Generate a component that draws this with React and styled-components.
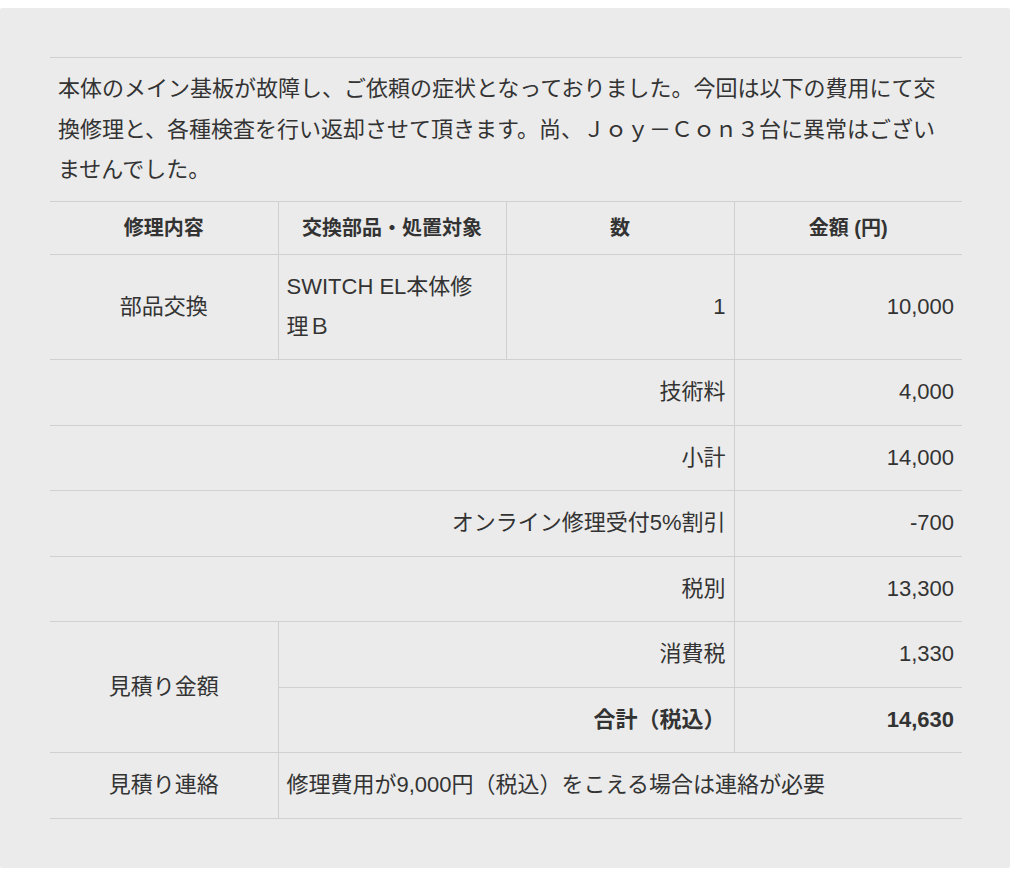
import React from 'react';
import styled, { createGlobalStyle } from 'styled-components';

const Global = createGlobalStyle`
  html, body {
    margin: 0;
    padding: 0;
    background: #ffffff;
  }
  body {
    font-family: "Liberation Sans", "Noto Sans CJK JP", sans-serif;
    color: #333333;
  }
`;

const Page = styled.div`
  padding: 8px 14px 18px 0;
`;

const Panel = styled.section`
  background: #ebebeb;
  padding: 49px 48px 49px 50px;
  border-radius: 2px;
`;

const Intro = styled.p`
  margin: 0;
  border-top: 1px solid #d0d0d0;
  padding: 11px 8px 10.5px;
  font-size: 22px;
  line-height: 40.5px;
`;

const Table = styled.table`
  width: 100%;
  border-collapse: collapse;
  table-layout: fixed;
  border-left-style: hidden;
  border-right-style: hidden;
`;

const HeadCell = styled.th`
  border: 1px solid #d0d0d0;
  padding: 12px 8px;
  font-size: 20px;
  line-height: 28px;
  font-weight: 700;
  text-align: center;
  color: #333333;
`;

const Cell = styled.td`
  border: 1px solid #d0d0d0;
  padding: ${(p) => (p.$align === 'left' || !p.$align ? '12px 16px 12px 8px' : '12px 8px')};
  font-size: 22px;
  line-height: 40.5px;
  text-align: ${(p) => p.$align || 'left'};
  font-weight: ${(p) => (p.$bold ? 700 : 400)};
  vertical-align: middle;
  color: #333333;
`;

const PartCell = styled(Cell)`
  padding-top: 11.5px;
  padding-bottom: 11.5px;
`;

const summaryRows = [
  { label: '技術料', value: '4,000' },
  { label: '小計', value: '14,000' },
  { label: 'オンライン修理受付5%割引', value: '-700' },
  { label: '税別', value: '13,300' },
];

export default function App() {
  return (
    <>
      <Global />
      <Page>
        <Panel>
          <Intro>
            本体のメイン基板が故障し、ご依頼の症状となっておりました。今回は以下の費用にて交換修理と、各種検査を行い返却させて頂きます。尚、Ｊｏｙ－Ｃｏｎ３台に異常はございませんでした。
          </Intro>
          <Table>
            <colgroup>
              <col />
              <col />
              <col />
              <col />
            </colgroup>
            <thead>
              <tr>
                <HeadCell>修理内容</HeadCell>
                <HeadCell>交換部品・処置対象</HeadCell>
                <HeadCell>数</HeadCell>
                <HeadCell>金額 (円)</HeadCell>
              </tr>
            </thead>
            <tbody>
              <tr>
                <PartCell $align="center">部品交換</PartCell>
                <PartCell>SWITCH EL本体修理Ｂ</PartCell>
                <PartCell $align="right">1</PartCell>
                <PartCell $align="right">10,000</PartCell>
              </tr>
              {summaryRows.map((r) => (
                <tr key={r.label}>
                  <Cell colSpan={3} $align="right">{r.label}</Cell>
                  <Cell $align="right">{r.value}</Cell>
                </tr>
              ))}
              <tr>
                <Cell rowSpan={2} $align="center">見積り金額</Cell>
                <Cell colSpan={2} $align="right">消費税</Cell>
                <Cell $align="right">1,330</Cell>
              </tr>
              <tr>
                <Cell colSpan={2} $align="right" $bold>合計（税込）</Cell>
                <Cell $align="right" $bold>14,630</Cell>
              </tr>
              <tr>
                <Cell $align="center">見積り連絡</Cell>
                <Cell colSpan={3}>修理費用が9,000円（税込）をこえる場合は連絡が必要</Cell>
              </tr>
            </tbody>
          </Table>
        </Panel>
      </Page>
    </>
  );
}
